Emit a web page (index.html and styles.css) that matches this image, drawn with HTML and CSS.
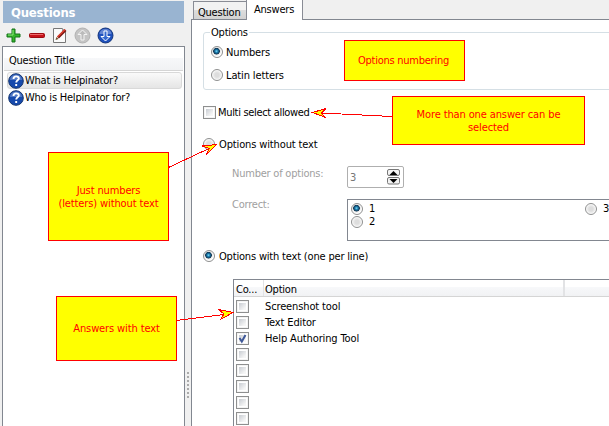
FILE: index.html
```html
<!DOCTYPE html>
<html lang="en">
<head>
<meta charset="utf-8">
<title>Questions</title>
<link rel="stylesheet" href="styles.css">
</head>
<body>
<div class="app">
  <aside class="sidebar">
    <h1 class="title">Questions</h1>
    <div class="toolbar">
      <svg width="17" height="17" viewBox="0 0 17 17"><path d="M7 2h3v5h5v3h-5v5H7v-5H2V7h5z" fill="#35b52b" stroke="#14731a"/><path d="M8 3v5H3" fill="none" stroke="#8ce77a"/></svg>
      <svg width="17" height="17" viewBox="0 0 17 17"><rect x="1.500" y="6.500" width="15" height="4" rx="1" fill="#c7141b" stroke="#9d0c12"/><path d="M2 7.500h13" stroke="#ee6a6a"/></svg>
      <svg width="17" height="17" viewBox="0 0 17 17"><path d="M2.500 1.500h9l3 3v11h-12z" fill="#fafafa" stroke="#777"/><path d="M11.500 1.500v3h3" fill="#ddd" stroke="#999"/><path d="M7 10.500L14.500 3" stroke="#7b1410" stroke-width="2.600"/><path d="M6.500 10L14 2.500" stroke="#e54432" stroke-width="1.300"/><path d="M4.500 13l1-3 2 2z" fill="#6d4b24"/></svg>
      <svg width="17" height="17" viewBox="0 0 17 17"><circle cx="8.500" cy="8.500" r="7.500" fill="#c4c4c4" stroke="#b1b1b1"/><path d="M8.500 3L4 7.500h3V13h3V7.500h3z" fill="#bbb" stroke="#f4f4f4"/></svg>
      <svg width="17" height="17" viewBox="0 0 17 17"><circle cx="8.500" cy="8.500" r="7.500" fill="#1e50bd" stroke="#153579"/><path d="M2.500 7a6 5 0 0 1 12 0" fill="#6385d3"/><path d="M8.500 14L4 9.500h3V4h3v5.500h3z" fill="#3468cf" stroke="#fff"/></svg>
    </div>
    <div class="list">
      <div class="list-head">Question Title</div>
      <div class="item selected"><svg width="16" height="16" viewBox="0 0 16 16"><circle cx="8" cy="8" r="7.300" fill="#174aad" stroke="#16366f"/><path d="M2 7a6 5.500 0 0 1 12 0" fill="#5279c6"/><path d="M5.500 6c0-3.500 5.300-3.300 5.300-.6C10.800 7.300 8.200 7.400 8.200 9.500M8.200 11v2" fill="none" stroke="#fff" stroke-width="1.900"/></svg><span>What is Helpinator?</span></div>
      <div class="item"><svg width="16" height="16" viewBox="0 0 16 16"><circle cx="8" cy="8" r="7.300" fill="#174aad" stroke="#16366f"/><path d="M2 7a6 5.500 0 0 1 12 0" fill="#5279c6"/><path d="M5.500 6c0-3.500 5.300-3.300 5.300-.6C10.800 7.300 8.200 7.400 8.200 9.500M8.200 11v2" fill="none" stroke="#fff" stroke-width="1.900"/></svg><span>Who is Helpinator for?</span></div>
    </div>
  </aside>
  <div class="splitter"><i></i><i></i><i></i><i></i><i></i><i></i><i></i></div>
  <main class="main">
    <nav class="tabs"><div class="tab">Question</div><div class="tab active">Answers</div></nav>
    <section class="page">
      <fieldset class="group">
        <legend>Options</legend>
        <div class="choice"><i class="radio on"></i><span>Numbers</span></div>
        <div class="choice"><i class="radio"></i><span>Latin letters</span></div>
      </fieldset>
      <div class="choice multi"><i class="check"></i><span>Multi select allowed</span></div>
      <div class="choice without"><i class="radio"></i><span>Options without text</span></div>
      <div class="field number"><label>Number of options:</label>
        <div class="spin"><span>3</span><svg width="13" height="16" viewBox="0 0 13 16"><rect x=".5" y=".5" width="12" height="6" rx="1.500" fill="#f3f3f3" stroke="#777"/><rect x=".5" y="8.500" width="12" height="6.500" rx="1.500" fill="#f3f3f3" stroke="#777"/><path d="M2.500 6h8l-4-4zM2.500 10h8l-4 4z" fill="#000"/></svg></div>
      </div>
      <div class="field correct"><label>Correct:</label>
        <div class="answers">
          <div class="choice"><i class="radio on"></i><span>1</span></div><div class="choice"><i class="radio"></i><span>3</span></div>
          <div class="choice"><i class="radio"></i><span>2</span></div>
        </div>
      </div>
      <div class="choice with"><i class="radio on"></i><span>Options with text (one per line)</span></div>
      <div class="table">
        <div class="thead"><div>Co...</div><div>Option</div><div></div></div>
        <div class="row"><i class="check"></i><span>Screenshot tool</span></div>
        <div class="row"><i class="check"></i><span>Text Editor</span></div>
        <div class="row"><i class="check"><svg width="11" height="11" viewBox="0 0 11 11"><path d="M2.500 5l2.300 3.500L8.500 2" fill="none" stroke="#3f5898" stroke-width="2"/></svg></i><span>Help Authoring Tool</span></div>
        <div class="row"><i class="check"></i></div>
        <div class="row"><i class="check"></i></div>
        <div class="row"><i class="check"></i></div>
        <div class="row"><i class="check"></i></div>
        <div class="row"><i class="check"></i></div>
      </div>
    </section>
  </main>
</div>
<div class="note n-numbering">Options numbering</div>
<div class="note n-multi">More than one answer can be<br>selected</div>
<div class="note n-just">Just numbers<br>(letters) without text</div>
<div class="note n-answers">Answers with text</div>
<svg class="arrows" width="609" height="426" viewBox="0 0 609 426" fill="#ff0" stroke="#f00" shape-rendering="crispEdges">
  <path d="M392 116.500L321 113M168.500 167.500L209 148.500M176.500 320.500L224 314.500"/>
  <path d="M312.500 112.500l13.500-4-4.500 4.500 3 4z"/>
  <path d="M216.500 144.500l-14 1.500 6.500 2.500-2.500 6z"/>
  <path d="M233 312.500l-14.500-3 5.500 4.500-3.500 5.500z"/>
</svg>
</body>
</html>
```
FILE: styles.css
```css
* { box-sizing: border-box; }
body { margin: 0; width: 609px; height: 426px; overflow: hidden; background: #f0f0f0; color: #000; font: 11px/13px "DejaVu Sans Condensed", "DejaVu Sans", sans-serif; font-stretch: condensed; letter-spacing: -.22px; white-space: nowrap; }
svg { display: block; flex: none; }
.app { display: flex; height: 426px; overflow: hidden; }
.sidebar { width: 185px; padding: 1px 0 0 2px; display: flex; flex-direction: column; flex: none; }
.title { margin: 0 1px; height: 22px; padding-left: 8px; background: #99b4d1; color: #fff; font-size: 13px; line-height: 23px; font-weight: bold; letter-spacing: -.2px; }
.toolbar { display: flex; gap: 6px; height: 23px; padding: 4px 0 0 3px; }
.list { flex: 1; background: #fff; border: 1px solid #828790; border-bottom: 0; padding: 1px; }
.list-head { height: 23px; margin: 0 0 1px; padding: 6px 5px 0; border-bottom: 1px solid #d5d5d5; background: linear-gradient(#fff 45%, #f7f8fa 45%, #f1f2f4); }
.item { display: flex; align-items: center; height: 17px; margin: 0 1px 0 3px; gap: 1px; border: 1px solid transparent; border-radius: 3px; }
.item.selected { border-color: #d9d9d9; background: linear-gradient(#fafafa, #e5e5e5); }
.splitter { width: 6px; flex: none; padding: 372px 0 0 2px; display: flex; flex-direction: column; gap: 2px; }
.splitter i { width: 2px; height: 2px; background: #aaa; flex: none; }
.main { flex: 1; min-width: 0; display: flex; flex-direction: column; }
.tabs { display: flex; height: 20px; padding-left: 2px; margin-bottom: -1px; align-items: flex-end; flex: none; }
.tab { width: 53px; height: 19px; border: 1px solid #898c95; border-right: 0; padding: 4px 0 0 4px; background: linear-gradient(#f2f2f2 50%, #ddd 50%, #d2d2d2); }
.tab.active { width: 57px; height: 20px; background: #fff; border: 1px solid #898c95; border-top: 0; border-bottom: 0; padding: 3px 0 0 7px; z-index: 1; }
.page { flex: 1; min-height: 0; background: #fff; border: solid #828790; border-width: 1px 0 0 1px; padding: 6px 0 0 11px; }
.group { margin: 0 -3px 0 0; padding: 6px 0 0 7px; height: 64px; border: 1px solid #d5dfe5; border-radius: 3px; }
.group legend { height: 13px; padding: 0 1px; margin-left: -1px; }
.choice { display: flex; align-items: center; height: 14px; gap: 4px; letter-spacing: -.13px; }
.group .choice { gap: 3px; }
.group .choice + .choice { margin-top: 9px; }
.radio { width: 12px; height: 12px; flex: none; border: 1px solid #8e8f8f; border-radius: 50%; background: radial-gradient(circle, #ddd 0 2px, #efefef 4px, #fff 5px); }
.radio.on { background: radial-gradient(circle at 45% 42%, #80dcf5 0, #1779ac 1.500px, #123551 3px, #e6e6e6 3.600px, #fff 5px); }
.check { width: 13px; height: 13px; flex: none; border: 1px solid #8e8f8f; background: linear-gradient(135deg, #c8ccd2, #f6f6f6 80%) content-box; padding: 2px; box-shadow: inset 0 0 0 1px #f4f4f4; }
.check svg { margin: -2px; }
.multi { margin-top: 15px; gap: 2px; letter-spacing: -.32px; }
.without { margin-top: 18px; }
.field { display: flex; margin-left: 29px; color: #a0a0a0; }
.field label { width: 115px; flex: none; }
.number { margin-top: 15px; height: 22px; }
.number label { padding-top: 1px; }
.spin { display: flex; justify-content: space-between; width: 57px; height: 22px; border: 1px solid #afafaf; border-radius: 2px; padding: 2px 3px 0 2px; color: #777; }
.spin span { padding-top: 2px; }
.correct { margin-top: 11px; }
.correct label { margin-top: -1px; }
.answers { flex: 1; height: 42px; color: #000; border: 1px solid #828790; border-right: 0; padding: 2px 0 0 3px; display: grid; grid-template-columns: 234px 1fr; grid-auto-rows: 13px; }
.answers .choice { height: 13px; gap: 6px; }
.with { margin-top: 8px; letter-spacing: -.18px; }
.table { margin: 16px 0 0 30px; height: 147px; overflow: hidden; border: solid #828790; border-width: 1px 0 0 1px; }
.thead { display: flex; height: 17px; border-bottom: 1px solid #d5d5d5; background: linear-gradient(#fff 45%, #f7f8fa 45%, #f1f2f4); margin-bottom: 3px; }
.thead div { width: 30px; padding: 3px 0 0 2px; border-right: 1px solid #e2e3e5; }
.thead div:nth-child(2) { width: 301px; padding-left: 1px; border-right-width: 2px; }
.thead div:last-child { flex: 1; border: 0; }
.row { display: flex; align-items: flex-start; height: 16px; padding-left: 2px; gap: 16px; letter-spacing: -.13px; }
.note { position: absolute; display: flex; align-items: center; justify-content: center; text-align: center; color: #f00; background: #ff0; border: 1px solid #f00; letter-spacing: -.12px; }
.n-numbering { left: 344px; top: 40px; width: 121px; height: 41px; padding-right: 2px; letter-spacing: -.25px; }
.n-multi { left: 392px; top: 96px; width: 193px; height: 49px; }
.n-just { left: 48px; top: 152px; width: 121px; height: 89px; }
.n-answers { left: 56px; top: 296px; width: 121px; height: 65px; }
.arrows { position: absolute; left: 0; top: 0; }
```
